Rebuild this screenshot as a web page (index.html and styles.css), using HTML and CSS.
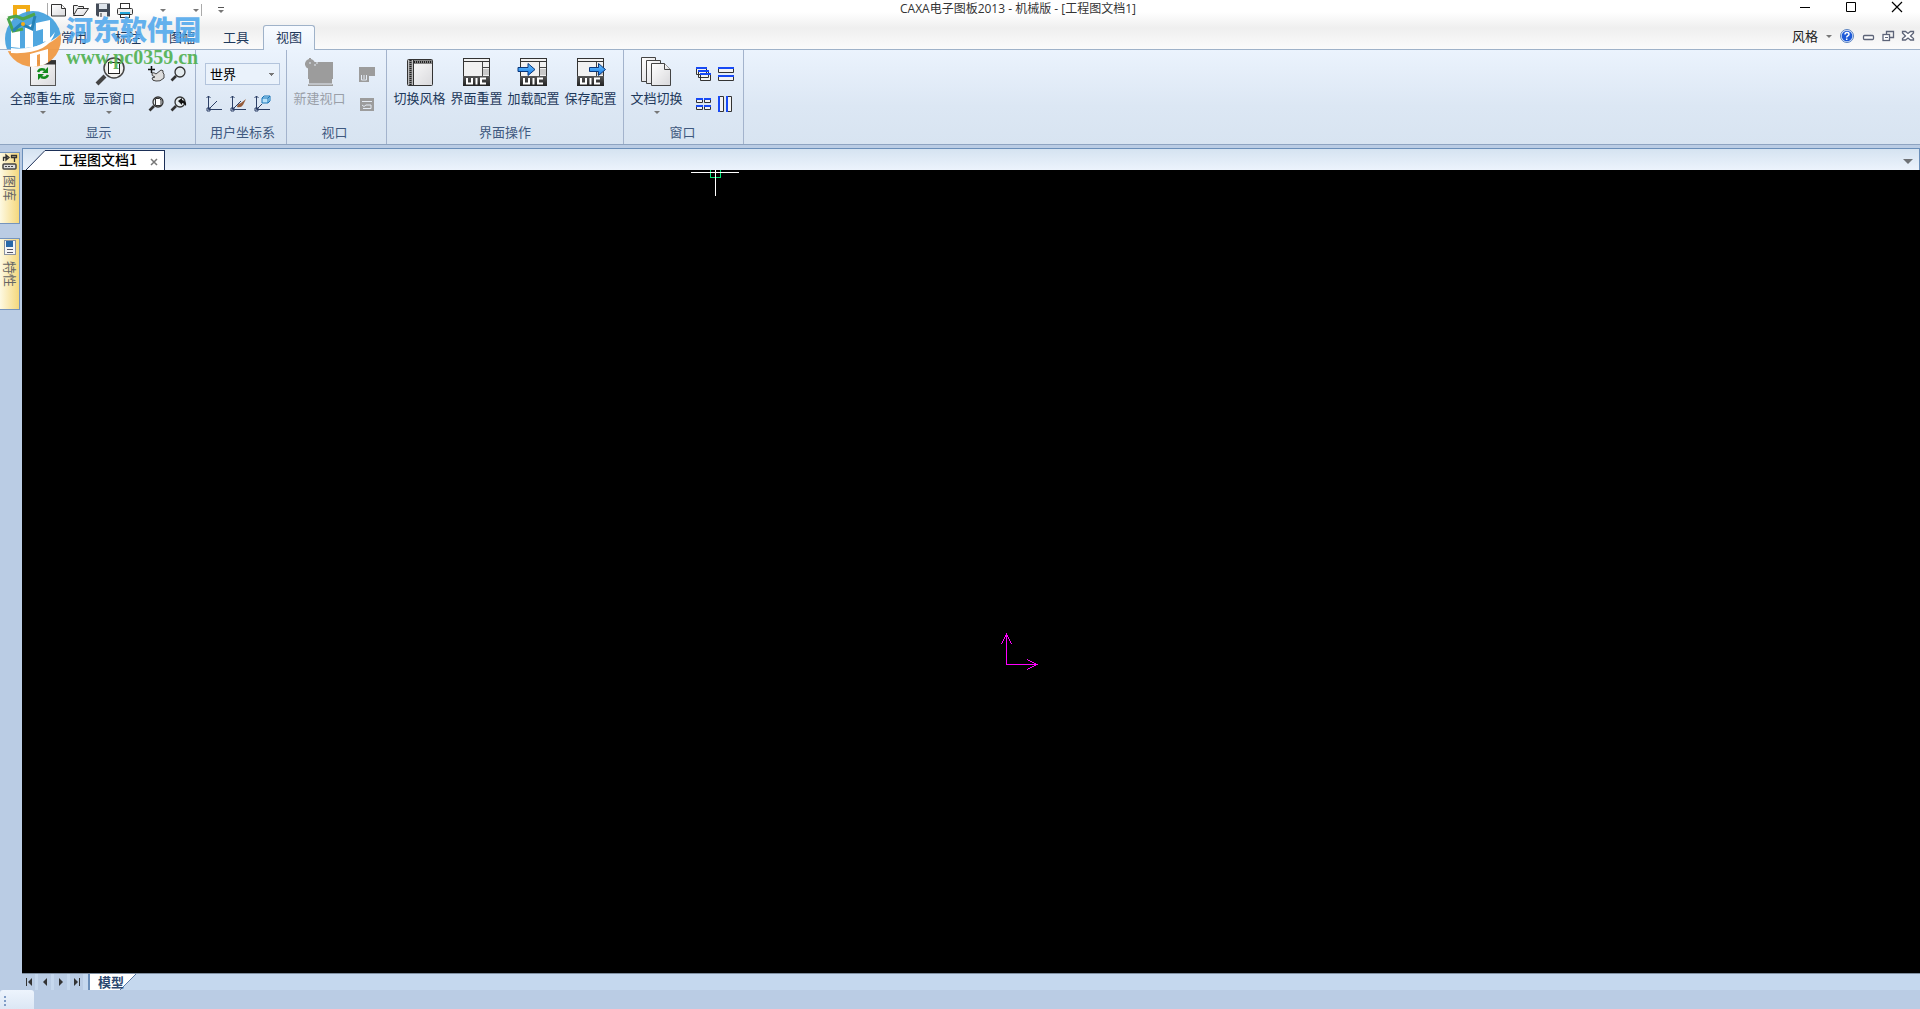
FILE: index.html
```html
<!DOCTYPE html>
<html lang="zh-CN">
<head>
<meta charset="utf-8">
<title>CAXA电子图板2013 - 机械版 - [工程图文档1]</title>
<link rel="stylesheet" href="styles.css">
</head>
<body>
<svg class="defs" width="0" height="0" aria-hidden="true">
  <defs>
    <linearGradient id="paper" x1="0" y1="0" x2="1" y2="1"><stop offset="0" stop-color="#fff"/><stop offset="1" stop-color="#d9d9dc"/></linearGradient>
    <linearGradient id="blue" x1="0" y1="0" x2="0" y2="1"><stop offset="0" stop-color="#6cc4ff"/><stop offset="1" stop-color="#1478e8"/></linearGradient>
    <linearGradient id="dark" x1="0" y1="0" x2="0" y2="1"><stop offset="0" stop-color="#555"/><stop offset="1" stop-color="#222"/></linearGradient>
    <symbol id="uic" viewBox="0 0 30 30">
      <rect x="1.500" y="1.500" width="26" height="27" fill="#f1f1f1" stroke="#333"/>
      <path d="M2 4.500h25" stroke="#333"/><path d="M20.500 5v14M20 10.500h7" stroke="#444"/>
      <rect x="21" y="12" width="6" height="6" fill="#c9c9c9"/>
      <rect x="1" y="19" width="27" height="10" fill="url(#dark)"/>
      <path d="M5 21v5.500h5V21M14.500 21v6.500M24 21.500h-5v5h5" fill="none" stroke="#fff" stroke-width="2"/>
    </symbol>
    <symbol id="lens" viewBox="0 0 16 16">
      <path d="M6 10L1.500 14.500" stroke="#333" stroke-width="2.600"/><circle cx="10" cy="6" r="5" fill="#e4ebee" stroke="#333" stroke-width="1.300"/>
    </symbol>
  </defs>
</svg>

<header class="header">
  <div class="titlebar">
    <div class="quick">
      <button class="tool" aria-label="新建"><svg width="18" height="14" viewBox="0 0 18 14"><path d="M1.500 1.500h10l4 4v7.500h-14z" fill="url(#paper)" stroke="#333"/><path d="M11.500 1.500v4h4" fill="#fff" stroke="#333"/></svg></button>
      <button class="tool" aria-label="打开"><svg width="18" height="14" viewBox="0 0 18 14"><path d="M1.500 11.500v-9h4l1 1h5v3" fill="#eee" stroke="#333"/><path d="M1.500 12.500l4-7h11l-5 7z" fill="url(#paper)" stroke="#333"/></svg></button>
      <button class="tool" aria-label="保存"><svg width="16" height="14" viewBox="0 0 16 14"><path d="M1 .5h14v13H2.500L1 12z" fill="#444c58"/><rect x="4" y="1" width="8" height="5" fill="#dfe5ec"/><rect x="4" y="9" width="8" height="5" fill="#eee"/><path d="M6 10v4" stroke="#333"/></svg></button>
      <button class="tool" aria-label="打印"><svg width="18" height="16" viewBox="0 0 18 16"><rect x="4.500" y="1.500" width="9" height="5" fill="#fff" stroke="#333"/><rect x="1.500" y="6.500" width="15" height="6" rx="1" fill="#eee" stroke="#333"/><rect x="4" y="10" width="10" height="2" fill="#25a6da"/><rect x="4.500" y="12.500" width="9" height="3" fill="#fff" stroke="#333"/></svg></button>
      <button class="tool arrow-only" aria-label="撤销"><i class="caret"></i></button>
      <button class="tool arrow-only divided" aria-label="恢复"><i class="caret"></i></button>
      <button class="tool customise" aria-label="自定义快速启动栏"><i class="bar"></i><i class="caret"></i></button>
    </div>
    <h1 class="title">CAXA电子图板2013 - 机械版 - [工程图文档1]</h1>
    <div class="window-buttons">
      <button aria-label="最小化"><svg width="12" height="12"><path d="M1 7.500h10" stroke="#000"/></svg></button>
      <button aria-label="最大化"><svg width="12" height="12"><path d="M1.500 2.500h9v9h-9z" fill="none" stroke="#000"/></svg></button>
      <button aria-label="关闭"><svg width="12" height="12"><path d="M1 2l10 10M11 2L1 12" stroke="#000" stroke-width="1.200"/></svg></button>
    </div>
  </div>
  <nav class="tabs">
    <button class="tab">常用</button>
    <button class="tab">标注</button>
    <button class="tab">图幅</button>
    <button class="tab">工具</button>
    <button class="tab active">视图</button>
    <div class="tab-end">
      <button class="style-menu">风格<i class="caret"></i></button>
      <button aria-label="帮助"><svg width="14" height="14" viewBox="0 0 14 14"><circle cx="7" cy="7" r="6.500" fill="#dce8fb" stroke="#5a82c0"/><circle cx="7" cy="7" r="5.300" fill="#1d5ad8"/><path d="M5 5.500q0-2 2-2t2 1.700q0 1-1.200 1.700T6.800 8.500M6.700 9.600v1.500" fill="none" stroke="#fff" stroke-width="1.500"/></svg></button>
      <button aria-label="最小化文档"><svg width="12" height="12"><rect x="1.500" y="5.500" width="10" height="4" rx="1" fill="#fff" stroke="#5d6478" stroke-width="1.300"/></svg></button>
      <button aria-label="还原文档"><svg width="12" height="12"><path d="M4.500 4V1.500h7v6H8" fill="none" stroke="#5d6478" stroke-width="1.300"/><rect x="1" y="4.500" width="6.500" height="6" fill="#fff" stroke="#5d6478" stroke-width="1.300"/><path d="M3 7.500h3" stroke="#5d6478"/></svg></button>
      <button aria-label="关闭文档"><svg width="12" height="12"><path d="M.5 1.500h3l2.500 2 2.500-2h3v1.500L8.500 6 11.500 8.500V10h-3L6 8l-2.500 2h-3V8.500L3.500 6 .5 3z" fill="#fff" stroke="#5d6478" stroke-width="1.300"/></svg></button>
    </div>
  </nav>
</header>

<section class="ribbon">
  <section class="panel display">
    <div class="panel-body">
      <button class="big"><svg width="30" height="30" viewBox="0 0 30 30"><rect x="2.500" y="3.500" width="25" height="25" fill="url(#paper)" stroke="#555"/><path d="M2 5.500h26" stroke="#333" stroke-width="4"/><path d="M4 5.500h2M8 5.500h2" stroke="#e98a34" stroke-width="2"/><path d="M10 15q2-4 7-2M20 18q-2 4-7 2" fill="none" stroke="#128a1c" stroke-width="2.500"/><path d="M20 10v6h-6zM10 23v-6h6z" fill="#128a1c"/></svg><span>全部重生成</span><i class="caret"></i></button>
      <button class="big"><svg width="30" height="30" viewBox="0 0 30 30"><path d="M11 19l-8 8" stroke="#444" stroke-width="4"/><circle cx="20" cy="11" r="10" fill="#f0f0ee" stroke="#444" stroke-width="1.500"/><rect x="14.500" y="5.500" width="11" height="11" fill="#fff" stroke="#222"/></svg><span>显示窗口</span><i class="caret"></i></button>
      <div class="small-grid">
        <button aria-label="平移"><svg width="18" height="18" viewBox="0 0 18 18"><path d="M5 8q2-1 4 1l5-4q3 0 2 3l1 1v4q-4 4-8 3-4 0-4-3l3-1q-4-1-3-4z" fill="#ddd" stroke="#444"/><path d="M4.500 1v7M1 4.500h7" stroke="#111" stroke-width="1.500"/></svg></button>
        <button aria-label="动态缩放"><svg width="18" height="18"><use href="#lens" x="1" y="1" width="16" height="16"/></svg></button>
        <button aria-label="显示全部"><svg width="18" height="18"><use href="#lens" x="1" y="1" width="16" height="16"/><path d="M8.500 3.500h4l1.500 1.500v5.500H8.500z" fill="#fff" stroke="#333"/></svg></button>
        <button aria-label="显示上一步"><svg width="18" height="18"><use href="#lens" x="1" y="1" width="16" height="16"/><path d="M9 6l4-3v2q5 1 4 6-2-3-4-3v2z" fill="#111"/></svg></button>
      </div>
    </div>
    <h2>显示</h2>
  </section>
  <section class="panel ucs">
    <div class="panel-body">
      <select class="combo" aria-label="用户坐标系"><option>世界</option></select>
      <div class="ucs-row">
        <button aria-label="新建坐标系"><svg width="18" height="18" viewBox="0 0 18 18"><path d="M3.500 2v13.500H17M4 15l8-8" fill="none" stroke="#2c3f66"/><path d="M1.500 4l2-2 2 2M2 14h3v3H2z" fill="none" stroke="#2c3f66"/></svg></button>
        <button aria-label="编辑坐标系"><svg width="18" height="18" viewBox="0 0 18 18"><path d="M3.500 2v13.500H17M4 15l8-8" fill="none" stroke="#2c3f66"/><path d="M1.500 4l2-2 2 2M2 14h3v3H2z" fill="none" stroke="#2c3f66"/><path d="M8 13q0-3 4-4l5-4-3 6q-2 3-6 2z" fill="#955c3b"/></svg></button>
        <button aria-label="坐标系对象"><svg width="18" height="18" viewBox="0 0 18 18"><path d="M3.500 2v13.500H17M4 15l5-5" fill="none" stroke="#2c3f66"/><path d="M1.500 4l2-2 2 2M2 14h3v3H2z" fill="none" stroke="#2c3f66"/><path d="M9 4l2-2h6v5l-2 2H9z" fill="#b9e3fb" stroke="#1974b6"/><path d="M9 4h6v5M15 4l2-2" fill="none" stroke="#1974b6"/></svg></button>
      </div>
    </div>
    <h2>用户坐标系</h2>
  </section>
  <section class="panel viewport">
    <div class="panel-body">
      <button class="big" disabled><svg width="30" height="30" viewBox="0 0 30 30"><path d="M3 5h25v24H3z" fill="#9c9c9c"/><circle cx="5" cy="7" r="5" fill="#9c9c9c"/><path d="M5 1v13M0 7h12" stroke="#9c9c9c" stroke-width="2"/><path d="M3.500 22v5h24v-5" fill="none" stroke="#e4ebf4"/><path d="M4 6h2M11 6h2M9 8h2" stroke="#e4ebf4"/></svg><span>新建视口</span></button>
      <div class="small-grid single">
        <button disabled aria-label="对齐视口"><svg width="18" height="18"><path d="M1 2h16v9h-6v6H1z" fill="#9c9c9c"/><path d="M3.500 10v5h5v-5M6 10v4" fill="none" stroke="#e4ebf4"/></svg></button>
        <button disabled aria-label="视口属性"><svg width="18" height="18"><path d="M2 3h14v13H2z" fill="#9c9c9c"/><path d="M4 6.500h10M4 10q2 3 4 0h5v3.500H5" fill="none" stroke="#e4ebf4"/></svg></button>
      </div>
    </div>
    <h2>视口</h2>
  </section>
  <section class="panel interface">
    <div class="panel-body">
      <button class="big"><svg width="30" height="30" viewBox="0 0 30 30"><rect x="2.500" y="2.500" width="25" height="26" rx="1" fill="url(#paper)" stroke="#333"/><path d="M5.500 3v25M8 5h19" stroke="#888" stroke-width="4"/><path d="M5.500 3v25M9 5h18" stroke="#222" stroke-width="2" stroke-dasharray="1 1"/><path d="M8.500 3v25" stroke="#333"/></svg><span>切换风格</span></button>
      <button class="big"><svg width="30" height="30"><use href="#uic"/></svg><span>界面重置</span></button>
      <button class="big"><svg width="30" height="30"><use href="#uic"/><path d="M-1 10.500h10V6.500l7 6-7 6v-4H-1z" fill="url(#blue)" stroke="#09377d"/></svg><span>加载配置</span></button>
      <button class="big"><svg width="30" height="30"><use href="#uic"/><path d="M13.500 10.500h9V6.500l7 6-7 6v-4h-9z" fill="url(#blue)" stroke="#09377d"/></svg><span>保存配置</span></button>
    </div>
    <h2>界面操作</h2>
  </section>
  <section class="panel windows">
    <div class="panel-body">
      <button class="big"><svg width="32" height="30" viewBox="0 0 32 30"><g fill="url(#paper)" stroke="#444"><path d="M.5.500h14v24H.5z"/><path d="M5.500 3.500h14v23h-14z"/><path d="M10.500 6.500h13l6 6v16h-19z"/><path d="M23.500 6.500v6h6"/></g></svg><span>文档切换</span><i class="caret"></i></button>
      <div class="small-grid">
        <button aria-label="层叠"><svg width="18" height="18"><g fill="#f3f3f3" stroke="#333"><path d="M1.500 2.500h10v7h-10zM3.500 5.500h10v7h-10zM5.500 8.500h10v7h-10z"/></g><path d="M1 3h11M3 6h11M5 9h11" stroke="#1749f5" stroke-width="2"/></svg></button>
        <button aria-label="水平平铺"><svg width="18" height="18"><path d="M1.500 2.500h15v5h-15zM1.500 10.500h15v5h-15z" fill="#f3f3f3" stroke="#333"/><path d="M1 3h16M1 11h16" stroke="#1749f5" stroke-width="2"/></svg></button>
        <button aria-label="排列图标"><svg width="18" height="18"><path d="M1.500 3.500h6v4h-6zM9.500 3.500h6v4h-6zM1.500 10.500h6v4h-6zM9.500 10.500h6v4h-6z" fill="#f3f3f3" stroke="#333"/><path d="M1 4h7M9 4h7M1 11h7M9 11h7" stroke="#1749f5" stroke-width="2"/></svg></button>
        <button aria-label="垂直平铺"><svg width="18" height="18"><path d="M1.500 1.500h5v15h-5zM9.500 1.500h5v15h-5z" fill="#f3f3f3" stroke="#333"/><path d="M2 1v16M10 1v16" stroke="#1749f5" stroke-width="2"/></svg></button>
      </div>
    </div>
    <h2>窗口</h2>
  </section>
</section>

<main class="workspace">
  <aside class="dock">
    <button class="dock-tab"><svg width="16" height="18" viewBox="0 0 16 18"><path d="M1.500 8V4.500h4M4 2l3 2.500L4 7zM9.500 2.500h5v2h-5zM12.500 5v4" fill="none" stroke="#333" stroke-width="1.300"/><rect x="1" y="11" width="13" height="5" rx="1" fill="#ddd" stroke="#444" stroke-width="1.500"/><path d="M3 13.500h9" stroke="#444" stroke-dasharray="2 1"/></svg><span>图库</span></button>
    <button class="dock-tab"><svg width="16" height="18" viewBox="0 0 16 18"><rect x="2.500" y="1.500" width="11" height="14" fill="#f5f5f5" stroke="#8a93a0"/><rect x="4" y="2" width="7" height="6" fill="#2868a8"/><path d="M5 10.500h6M5 13.500h6" stroke="#556"/></svg><span>特性</span></button>
  </aside>
  <section class="document">
    <div class="doc-tabs">
      <svg class="slope" width="19" height="20" viewBox="0 0 19 20"><path d="M0 20L19 0v20z" fill="#fff"/><path d="M0 20L19 .5" stroke="#1b2f57"/></svg>
      <div class="doc-tab"><button class="doc-name">工程图文档1</button><button class="doc-close" aria-label="关闭"><svg width="8" height="8"><path d="M1 1l6 6M7 1L1 7" stroke="#777" stroke-width="1.500"/></svg></button></div>
      <button class="doc-list" aria-label="文档列表"><svg width="10" height="5"><path d="M0 0h10L5 5z" fill="#6f7276"/></svg></button>
    </div>
    <div class="canvas">
      <svg class="cursor" width="50" height="28" shape-rendering="crispEdges"><path d="M20.500 0v7.500h10V0" fill="none" stroke="#00e676"/><path d="M1 2.500h48M25.500 0v26" stroke="#fff"/></svg>
      <svg class="axes" width="34" height="36" shape-rendering="crispEdges"><path d="M5.500 1v29.500H36M.5 10l5-9.500 5 9.500M26 25.500l10 5-10 5" fill="none" stroke="#f0f"/></svg>
    </div>
    <div class="sheet-bar">
      <div class="sheet-nav">
        <button aria-label="第一页"><svg width="8" height="8"><path d="M1.500 0v8" stroke="#333"/><path d="M7 0v8L3 4z" fill="#333"/></svg></button>
        <button aria-label="上一页"><svg width="8" height="8"><path d="M6 0v8L2 4z" fill="#333"/></svg></button>
        <button aria-label="下一页"><svg width="8" height="8"><path d="M2 0v8l4-4z" fill="#333"/></svg></button>
        <button aria-label="最后一页"><svg width="8" height="8"><path d="M6.500 0v8" stroke="#333"/><path d="M1 0v8l4-4z" fill="#333"/></svg></button>
      </div>
      <button class="sheet">模型</button>
      <svg width="16" height="16"><path d="M0 0h16L0 16z" fill="#fff"/><path d="M16 0L0 16" stroke="#5b7ba6"/></svg>
    </div>
  </section>
</main>
<footer class="status"><div class="grip"></div></footer>

<div class="watermark">
  <svg width="66" height="70" viewBox="0 0 66 70">
    <defs><clipPath id="disc"><circle cx="33" cy="39" r="28"/></clipPath></defs>
    <path d="M15 20V7h13v12" fill="none" stroke="#f2ac17" stroke-width="4"/>
    <g clip-path="url(#disc)">
      <path d="M0 0h66v28Q50 50 5 49z" fill="#3d9ddd" opacity=".9"/>
      <path d="M5 51Q48 53 64 30v40H5z" fill="#f09a45" opacity=".95"/>
      <path d="M11 31l9-3v20l-9-1zM25 28l8-5v24l-8 1zM36 23l14-3v20l-7 2V29l-7 2zM11 48q30 4 44-16-6 23-44 21z" fill="#fff"/>
      <path d="M30 54l18-5v18h-8V54l-3 1v12h-7z" fill="#fff"/>
    </g>
    <path d="M8 18l8-2 7 3 12-5M8 18l5 13 10-2" fill="none" stroke="#4da64a" stroke-width="3"/>
    <path d="M13 31l8-7 11 5 3-13" fill="none" stroke="#2782b5" stroke-width="3"/>
    <circle cx="23" cy="24" r="2" fill="#f2ac17"/>
  </svg>
  <div class="mark-text"><strong>河东软件园</strong><span>www.pc0359.cn</span></div>
</div>
</body>
</html>
```
FILE: styles.css
```css
* { box-sizing: border-box; }
body {
  margin: 0;
  min-height: 100vh;
  display: flex;
  flex-direction: column;
  background: #bacce4;
  color: #1e395b;
  font: 13px/18px "Noto Sans CJK SC", sans-serif;
}
button {
  margin: 0;
  padding: 0;
  border: 0;
  background: none;
  color: inherit;
  font: inherit;
  white-space: nowrap;
}
h1, h2 { margin: 0; font-weight: 400; }
svg { display: block; overflow: visible; flex: none; }
.defs { position: absolute; }
.caret {
  width: 0;
  height: 0;
  border: 3px solid transparent;
  border-top-color: #777;
  border-bottom: 0;
}

/* Title bar and ribbon tabs */
.header {
  height: 50px;
  display: flex;
  flex-direction: column;
  justify-content: space-between;
  border-bottom: 1px solid #9fb2c9;
  background: linear-gradient(#fff 0, #fff 12px, #efefef 28px, #fbfbfb 49px);
}
.titlebar { display: flex; height: 20px; }
.quick { display: flex; align-items: center; gap: 4px; width: 190px; margin-left: 47px; }
.quick::before { content: ""; height: 14px; border-left: 1px solid #aaa; margin-right: -2px; }
.tool { width: 18px; display: flex; justify-content: center; }
.arrow-only { width: 28px; justify-content: flex-end; }
.divided { width: 32px; padding-right: 2px; border-right: 1px solid #aaa; height: 12px; align-items: center; }
.customise { flex-direction: column; align-items: center; gap: 2px; margin-left: 6px; }
.bar { width: 6px; border-top: 1px solid #555; }
.title { flex: 1; text-align: center; font: 12px/17px "Open Sans", "Noto Sans CJK SC", sans-serif; color: #333; }
.window-buttons { display: flex; justify-content: flex-end; gap: 34px; padding-right: 17px; align-items: flex-start; }
.tabs { display: flex; align-items: flex-end; height: 25px; padding-left: 47px; margin-bottom: -1px; }
.tab { width: 54px; height: 25px; padding-bottom: 2px; }
.tab.active {
  width: 52px;
  border: 1px solid #9fb2c9;
  border-bottom: 0;
  border-radius: 3px 3px 0 0;
  background: linear-gradient(#f8fbff, #ebf3fc);
}
.tab-end { display: flex; align-items: center; gap: 8px; height: 25px; margin-left: auto; padding: 0 6px 3px 0; color: #222; }
.style-menu { display: flex; align-items: center; gap: 8px; }

/* Ribbon */
.ribbon { display: flex; height: 95px; border-bottom: 1px solid #8ea4c1; background: linear-gradient(#ebf3fd, #dce7f4 60%, #d8e4f1); }
.panel { display: flex; flex-direction: column; justify-content: space-between; border-right: 1px solid #a3b3cc; padding: 7px 8px 2px; }
.panel h2 { text-align: center; color: #3f5980; font-size: 13px; line-height: 20px; white-space: nowrap; }
.panel-body { display: flex; justify-content: center; gap: 4px; }
.big { display: flex; flex-direction: column; align-items: center; width: 53px; line-height: 22px; }
.big .caret { margin-top: 2px; }
.big:disabled { color: #9a9fa8; }
.small-grid { display: grid; grid-template-columns: 18px 18px; grid-auto-rows: 18px; gap: 12px 4px; padding-top: 8px; }
.small-grid.single { grid-template-columns: 18px; }
.display { width: 196px; padding-left: 10px; }
.display .panel-body { gap: 8px; }
.display .big:first-child { width: 65px; }
.display .small-grid { margin-left: 4px; }
.ucs { width: 91px; padding-left: 9px; padding-right: 6px; }
.ucs .panel-body { flex-direction: column; gap: 9px; padding-top: 6px; }
.combo {
  appearance: none;
  width: 75px;
  height: 22px;
  padding: 0 4px;
  border: 1px solid #b3c4dc;
  border-radius: 0;
  color: #000;
  font: inherit;
  line-height: 18px;
  background: linear-gradient(45deg, transparent 50%, #777 0) right 6px center / 3px 3px no-repeat, linear-gradient(-45deg, transparent 50%, #777 0) right 3px center / 3px 3px no-repeat, #eaf2fb;
  background: conic-gradient(from -45deg at 50% 100%, #777 90deg, transparent 0) right 4px center / 6px 3px no-repeat, #eaf2fb;
  background: conic-gradient(from 315deg at 3px 3px, #777 90deg, transparent 0) right 4px center / 6px 3px no-repeat, #eaf2fb;
}
.ucs-row { display: flex; gap: 6px; }
.viewport { width: 100px; padding: 7px 8px 2px 4px; }
.viewport .panel-body { gap: 12px; }
.interface { width: 237px; padding: 7px 4px 2px; }
.windows { width: 120px; padding: 7px 8px 2px 6px; }
.windows .panel-body { gap: 12px; }

/* Drawing area */
.workspace { flex: 1; display: flex; padding-top: 3px; }
.dock { width: 22px; display: flex; flex-direction: column; gap: 14px; padding: 4px 2px 0 0; }
.dock-tab {
  display: flex;
  flex-direction: column;
  align-items: center;
  gap: 4px;
  width: 20px;
  height: 72px;
  border: 1px solid #7594bd;
  border-left: 0;
  background: linear-gradient(90deg, #fdf9e2, #f5d87c);
  color: #666;
}
.dock-tab span { writing-mode: vertical-rl; text-orientation: sideways; line-height: 20px; }
.document { flex: 1; display: flex; flex-direction: column; min-width: 0; }
.doc-tabs { display: flex; align-items: flex-end; height: 22px; padding-left: 3px; border: 1px solid #6b8fb9; border-bottom: 0; background: linear-gradient(#d5e3f1, #ecf3fc); }
.doc-tab { display: flex; align-items: flex-start; gap: 13px; height: 20px; padding: 0 6px 0 14px; border: 1px solid #1b2f57; border-width: 1px 1px 0 0; background: #fff; }
.doc-name { color: #000; font-size: 14px; line-height: 16px; font-weight: 500; }
.doc-close { padding-top: 7px; }
.doc-list { margin: 0 6px 6px auto; }
.canvas { flex: 1; position: relative; background: #000; }
.cursor { position: absolute; left: calc(36.5% - 25px); top: 0; }
.axes { position: absolute; left: calc(52% - 8px); top: calc(58% - 2px); }
.sheet-bar { display: flex; height: 17px; border-top: 1px solid #7e8ea0; background: #c5d8ee; }
.sheet-nav { display: flex; gap: 3px; padding-right: 5px; }
.sheet-nav button { width: 13px; display: flex; justify-content: center; align-items: center; background: #b9cce4; }
.sheet { position: relative; z-index: 1; width: 32px; height: 16px; padding-left: 8px; border-left: 2px solid #6b8fb9; background: #fff; color: #2c4870; font-weight: 700; line-height: 16px; text-align: left; }
.status { height: 19px; }
.grip {
  width: 34px;
  height: 19px;
  border-radius: 3px 3px 0 0;
  background: repeating-linear-gradient(transparent 0, transparent 2px, #7f9cc6 2px, #7f9cc6 4px) 4px 4px / 2px 14px no-repeat, linear-gradient(#edf4fd, #dce7f4);
}

/* Site mark laid over the top-left corner */
.watermark { position: absolute; left: 0; top: 0; display: flex; pointer-events: none; }
.mark-text { display: flex; flex-direction: column; padding-top: 12px; }
.mark-text strong { color: #4aa5ec; font-size: 27px; line-height: 34px; font-weight: 900; opacity: .85; }
.mark-text span { color: #4fb04f; font: 700 20px/22px "Liberation Serif", serif; opacity: .9; }
```
